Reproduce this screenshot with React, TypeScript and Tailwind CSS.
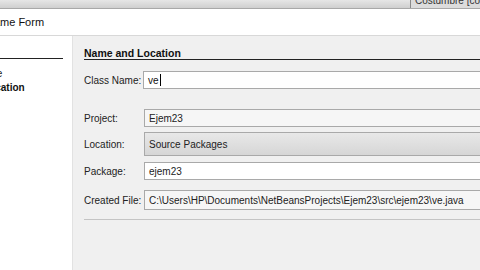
import React from "react";

const font = { fontFamily: '"Liberation Sans", Arial, sans-serif' };

function Field({ label, value, kind }: { label: string; value: string; kind: "plain" | "combo" | "white" | "readonly" }) {
  const box =
    kind === "combo"
      ? "h-[24px] bg-gradient-to-b from-[#e8e8e8] to-[#d6d6d6] border-[#a9a9a9]"
      : kind === "white"
      ? "h-[18px] bg-white border-[#a9a9a9]"
      : kind === "readonly"
      ? "h-[20px] bg-[#f6f6f6] border-[#a9a9a9]"
      : "h-[18px] bg-[#f6f6f6] border-[#a9a9a9]";
  return (
    <div className="flex items-center">
      <div className="w-[60px] shrink-0 text-[10px] text-[#222] whitespace-nowrap">{label}</div>
      <div className={`flex-1 flex items-center border border-r-0 pl-[4px] text-[10px] text-[#222] whitespace-nowrap ${box}`}>
        {value}
      </div>
    </div>
  );
}

export default function App() {
  return (
    <div className="w-[480px] h-[270px] overflow-hidden bg-white flex flex-col" style={font}>
      {/* top strip */}
      <div className="h-[9px] shrink-0 flex bg-gradient-to-b from-[#e6e6e6] to-[#cfcfcf] border-b border-[#a8a8a8]">
        <div className="flex-1" />
        <div className="w-[70px] border-l border-[#8a8a8a] bg-[#dcdcdc] overflow-hidden">
          <div className="-mt-[7px] pl-[4px] text-[10px] text-[#333] whitespace-nowrap">Costumbre [cos</div>
        </div>
      </div>

      {/* header */}
      <div className="h-[27px] shrink-0 flex items-center overflow-hidden border-b border-[#d8d8d8]">
        <div className="-ml-[47px] text-[11px] text-[#111] whitespace-nowrap">New JFrame Form</div>
      </div>

      {/* body */}
      <div className="flex flex-1 min-h-0">
        <div className="w-[72px] shrink-0 bg-white overflow-hidden">
          <div className="mt-[22px] h-0 border-b border-[#222] w-[63px]" />
          <div className="mt-[8px] -ml-[38px] text-[10px] text-[#222] whitespace-nowrap leading-[14px]">File Type</div>
          <div className="-ml-[17px] text-[10px] font-bold text-[#111] whitespace-nowrap leading-[14px]">Location</div>
        </div>

        <div className="flex-1 bg-[#f0f0f0] border-l border-[#e2e2e2] pl-[11px] flex flex-col">
          <div className="mt-[10px] h-[14px] border-b border-[#222] text-[10.5px] font-bold text-[#111] leading-[14px]">
            Name and Location
          </div>
          <div className="mt-[11px] flex items-center">
            <div className="w-[59px] shrink-0 text-[10px] text-[#222] whitespace-nowrap">Class Name:</div>
            <div className="flex-1 h-[18px] bg-white border border-r-0 border-[#a9a9a9] pl-[4px] flex items-center text-[10px] text-[#111]">
              ve<span className="w-px h-[12px] bg-black ml-px" />
            </div>
          </div>

          <div className="mt-[20px] flex flex-col gap-[5px]">
            <Field label="Project:" value="Ejem23" kind="plain" />
            <Field label="Location:" value="Source Packages" kind="combo" />
            <div className="mt-px">
              <Field label="Package:" value="ejem23" kind="white" />
            </div>
            <div className="mt-[5px]">
              <Field
                label="Created File:"
                value={"C:\\Users\\HP\\Documents\\NetBeansProjects\\Ejem23\\src\\ejem23\\ve.java"}
                kind="readonly"
              />
            </div>
          </div>

          <div className="mt-[9px] h-0 border-b border-[#c4c4c4]" />
        </div>
      </div>
    </div>
  );
}
